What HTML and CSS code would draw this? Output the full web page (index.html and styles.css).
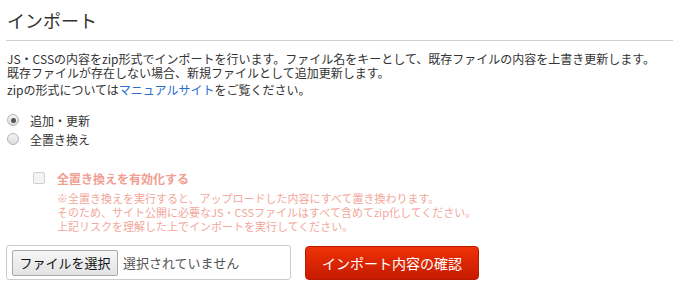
FILE: index.html
```html
<!DOCTYPE html>
<html lang="ja">
<head>
<meta charset="utf-8">
<link rel="stylesheet" href="styles.css">
</head>
<body>
<div class="page">
  <h1 class="title">インポート</h1>
  <div class="desc">
    <p class="line">JS・CSSの内容をzip形式でインポートを行います。ファイル名をキーとして、既存ファイルの内容を上書き更新します。</p>
    <p class="line">既存ファイルが存在しない場合、新規ファイルとして追加更新します。</p>
    <p class="line line-last">zipの形式については<a class="link" href="#">マニュアルサイト</a>をご覧ください。</p>
  </div>
  <div class="radios">
    <label class="radio-row"><span class="radio checked"></span><span class="radio-label">追加・更新</span></label>
    <label class="radio-row"><span class="radio"></span><span class="radio-label">全置き換え</span></label>
  </div>
  <div class="replace">
    <label class="check-row"><span class="checkbox"></span><span class="check-label">全置き換えを有効化する</span></label>
    <div class="notes">
      <p class="note">※全置き換えを実行すると、アップロードした内容にすべて置き換わります。</p>
      <p class="note">そのため、サイト公開に必要なJS・CSSファイルはすべて含めてzip化してください。</p>
      <p class="note">上記リスクを理解した上でインポートを実行してください。</p>
    </div>
  </div>
  <div class="actions">
    <div class="file-box">
      <span class="file-btn">ファイルを選択</span>
      <span class="file-status">選択されていません</span>
    </div>
    <button class="submit" type="button">インポート内容の確認</button>
  </div>
</div>
</body>
</html>
```
FILE: styles.css
```css
html, body {
  margin: 0;
  padding: 0;
  background: #fff;
}
body {
  font-family: "Noto Sans CJK JP", "Noto Sans", sans-serif;
  color: #333;
  font-size: 12px;
}
.page {
  padding: 8px 0 0 6px;
}
.title {
  margin: 0;
  font-size: 18px;
  font-weight: normal;
  line-height: 24px;
  color: #333;
  padding: 0 0 8px 1px;
  border-bottom: 1px solid #cfcfcf;
}
.desc {
  margin-top: 11px;
  padding-left: 1px;
}
.line {
  margin: 0;
  line-height: 14px;
  white-space: nowrap;
}
.line-last {
  margin-top: 3px;
}
.link {
  color: #2b6ed0;
  text-decoration: none;
}
.radios {
  margin-top: 15px;
  display: flex;
  flex-direction: column;
  gap: 3px;
}
.radio-row {
  display: flex;
  align-items: center;
  height: 16px;
}
.radio {
  width: 12px;
  height: 12px;
  border-radius: 50%;
  border: 1px solid #b5b5b5;
  background: linear-gradient(#f4f4f4, #dcdcdc);
  box-sizing: border-box;
  margin-left: 1px;
  display: flex;
  align-items: center;
  justify-content: center;
}
.radio.checked::after {
  content: "";
  width: 5px;
  height: 5px;
  border-radius: 50%;
  background: #555;
}
.radio-label {
  margin-left: 11px;
}
.replace {
  margin-top: 23px;
  padding-left: 27px;
}
.check-row {
  display: flex;
  align-items: center;
  height: 16px;
}
.checkbox {
  width: 12px;
  height: 12px;
  border: 1px solid #cfcfcf;
  border-radius: 2px;
  background: #f4f4f4;
  box-sizing: border-box;
}
.check-label {
  margin-left: 12px;
  color: #f09d92;
  font-weight: bold;
  font-size: 12px;
}
.notes {
  margin-top: 5px;
  padding-left: 24px;
}
.note {
  margin: 0;
  font-size: 11px;
  line-height: 14px;
  color: #f2a79b;
  white-space: nowrap;
}
.actions {
  margin-top: 12px;
  display: flex;
  align-items: center;
  gap: 14px;
}
.file-box {
  width: 285px;
  height: 35px;
  box-sizing: border-box;
  border: 1px solid #cccccc;
  border-radius: 3px;
  display: flex;
  align-items: center;
  padding-left: 5px;
}
.file-btn {
  display: inline-flex;
  align-items: center;
  justify-content: center;
  height: 26px;
  width: 106px;
  box-sizing: border-box;
  border: 1px solid #a9a9a9;
  border-radius: 2px;
  background: linear-gradient(#f6f6f6, #e3e3e3);
  color: #111;
  font-size: 13px;
}
.file-status {
  margin-left: 5px;
  font-size: 13px;
  color: #555;
}
.submit {
  width: 174px;
  height: 34px;
  border: 1px solid #b71a00;
  border-radius: 4px;
  background: linear-gradient(#ee3208, #c61a00);
  color: #fff;
  font-family: "Noto Sans CJK JP", "Noto Sans", sans-serif;
  font-size: 14px;
  padding: 0;
}
```
